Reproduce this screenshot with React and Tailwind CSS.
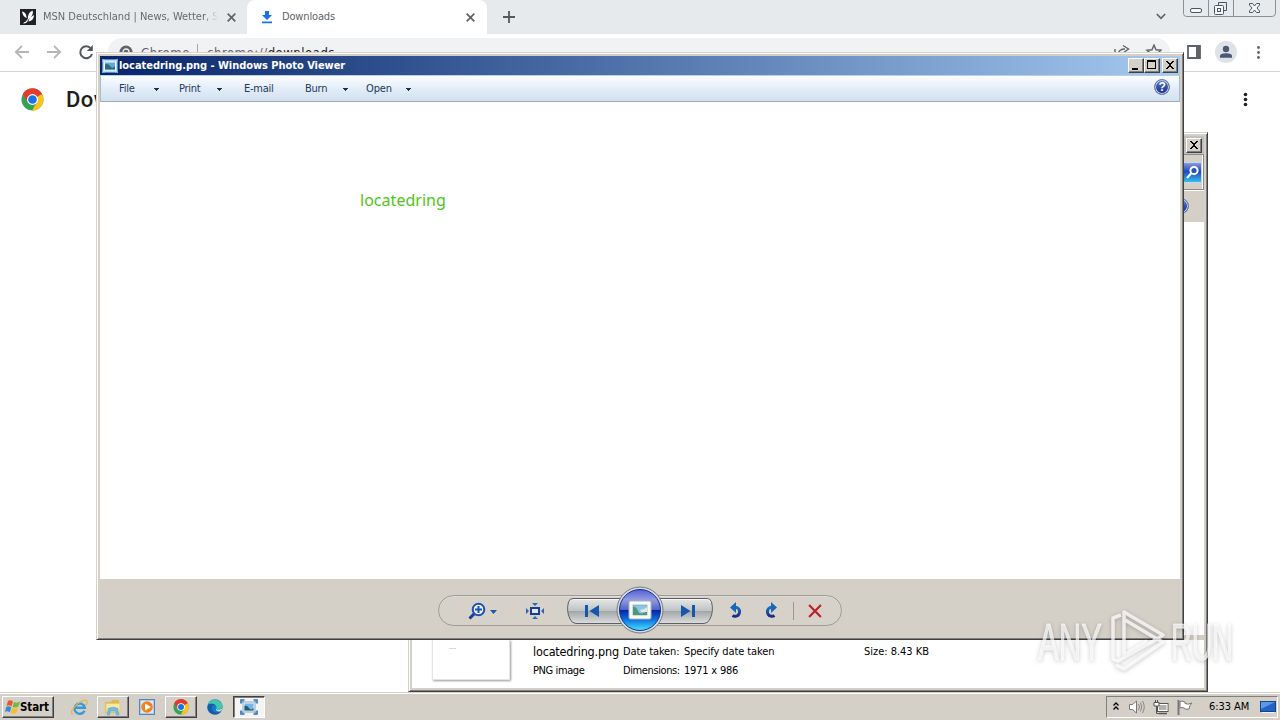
import React from "react";

const UI = "font-['DejaVu_Sans_Condensed','DejaVu_Sans',sans-serif] [font-stretch:condensed] whitespace-nowrap";

function Cross({ className = "", size = 9, w = 1.7, color = "#5f6368" }) {
  return (
    <svg className={className} width={size} height={size} viewBox="0 0 9 9">
      <path d="M0.7 0.7L8.3 8.3M8.3 0.7L0.7 8.3" stroke={color} strokeWidth={w} fill="none" />
    </svg>
  );
}

function ChromeLogo({ size }) {
  return (
    <svg width={size} height={size} viewBox="0 0 24 24">
      <circle cx="12" cy="12" r="11.5" fill="#34a353" />
      <path d="M12 12L2 6.2A11.5 11.5 0 0 1 22 6.3Z" fill="#e33b2e" />
      <path d="M12 12L22 6.3A11.5 11.5 0 0 1 11.5 23.5L17 14Z" fill="#fcc31e" />
      <path d="M12 6.3H22A11.5 11.5 0 0 0 2 6.2L7 15Z" fill="#e33b2e" />
      <circle cx="12" cy="12" r="5.7" fill="#fff" />
      <circle cx="12" cy="12" r="4.5" fill="#1a73e8" />
    </svg>
  );
}

function Dots({ color, h = 15, r = 1.4 }) {
  return (
    <svg width="5" height={h} viewBox={`0 0 5 ${h}`} fill={color}>
      <circle cx="2.5" cy={h / 2 - 5} r={r} />
      <circle cx="2.5" cy={h / 2} r={r} />
      <circle cx="2.5" cy={h / 2 + 5} r={r} />
    </svg>
  );
}

function WinButton({ kind }) {
  return (
    <div className="flex h-[15px] w-4 items-center justify-center border border-t-white border-l-white border-r-[#404040] border-b-[#404040] bg-[#d4d0c8] shadow-[inset_-1px_-1px_0_#808080]">
      <svg width="14" height="13" viewBox="0 0 14 13" shapeRendering="crispEdges">
        {kind === "min" && <path d="M3 9h6v2H3z" />}
        {kind === "max" && <path d="M2 1h9v9H2zM3 3v6h7V3z" fillRule="evenodd" />}
        {kind === "close" && (
          <path d="M3 2h2v1h1v1h2V3h1V2h2v1h-1v1H9v1H8v2h1v1h1v1h1v1H9V9H8V8H6v1H5v1H3V9h1V8h1V7h1V5H5V4H4V3H3z" />
        )}
      </svg>
    </div>
  );
}

function HelpIcon() {
  return (
    <div className="flex h-4 w-4 shrink-0 items-center justify-center rounded-full border border-[#6f83a8] bg-[#25429a] bg-linear-to-b from-[#5879cc] to-[#142c86] font-['Liberation_Sans',sans-serif] text-[12px] leading-none font-bold text-white shadow-[inset_0_0_0_1px_#c6d2eb]">
      ?
    </div>
  );
}

function PhotoIcon({ className = "", w = 16, h = 14 }) {
  return (
    <svg className={className} width={w} height={h} viewBox="0 0 16 14">
      <rect x="0.5" y="0.5" width="15" height="13" fill="#b9daf3" stroke="#5489bd" />
      <rect x="2" y="2.5" width="12" height="9" fill="#f3faff" />
      <rect x="3" y="3.5" width="10" height="7" fill="#61a9d8" />
      <path d="M3 5.5Q6 4 8 7T13 7.5V10.5H3Z" fill="#2e6b73" />
      <path d="M0 3V0H3M13 0H16V3M0 11V14H3M13 14H16V11" stroke="#7fb0dc" strokeWidth="1.4" fill="none" />
    </svg>
  );
}

function ViewerTaskIcon() {
  return (
    <svg width="18" height="16" viewBox="0 0 18 16">
      <path d="M1 4.500V1H4.500M13.500 1H17V4.500M1 11.500V15H4.500M13.500 15H17V11.500" stroke="#2c6cb0" strokeWidth="1.600" fill="none" />
      <path d="M1.500 1.500L4 4M16.500 1.500L14 4M1.500 14.500L4 12M16.500 14.500L14 12" stroke="#5c97d0" strokeWidth="1.200" />
      <rect x="3" y="3" width="12" height="10" fill="#eef6fc" stroke="#8ba9c4" />
      <rect x="4.500" y="4.500" width="9" height="7" fill="#74b6e6" />
      <path d="M4.500 7Q7 6 9 9T13.500 9V11.500H4.500Z" fill="#235a74" />
    </svg>
  );
}

function Caret() {
  return (
    <svg className="mt-px" width="5" height="3" viewBox="0 0 5 3" shapeRendering="crispEdges">
      <path d="M0 0h5v1H4v1H3v1H2V2H1V1H0z" fill="#1e2f50" />
    </svg>
  );
}

function ChromeWindow() {
  return (
    <div className="flex h-[692px] flex-col bg-white">
      <div className="flex h-[34px] bg-[#e7eaed]">
        <div className="flex w-[247px] items-center rounded-br-lg pl-5">
          <svg width="16" height="16" viewBox="0 0 16 16">
            <rect width="16" height="16" fill="#202124" />
            <path d="M2 2.500Q6 2.500 6.800 9Q3 8 2 2.500ZM8 11Q7 4 12.500 1.500Q14.500 5 8 11ZM8.500 12Q9.500 8 14 6Q14 11.500 8.500 12.500ZM7.800 9.500Q8.500 14.500 3 14.500Q4 13 6 12.500Z" fill="#fff" />
          </svg>
          <span className={`${UI} ml-[7px] w-[175px] overflow-hidden bg-linear-to-r from-[#5f6368] from-92% to-transparent bg-clip-text pt-px text-[11px] tracking-[-0.01px] text-transparent`}>
            MSN Deutschland | News, Wetter, Sport
          </span>
          <Cross className="ml-[9px]" />
        </div>
        <div className="flex w-60 items-center rounded-t-lg bg-white pl-[14px]">
          <svg width="12" height="14" viewBox="0 0 12 14">
            <path d="M4 1h4v4h3L6 10L1 5h3zM1 11.500h10v1.700H1z" fill="#1a73e8" />
          </svg>
          <span className={`${UI} ml-[9px] w-[184px] pt-px text-[11px] tracking-[-0.16px] text-[#5f6368]`}>Downloads</span>
          <Cross />
        </div>
        <div className="flex flex-1 items-center pl-4">
          <svg width="12" height="12" viewBox="0 0 12 12">
            <path d="M6 0v12M0 6h12" stroke="#55595e" strokeWidth="1.800" />
          </svg>
        </div>
        <svg className="mt-[13px] mr-[17px]" width="10" height="7" viewBox="0 0 10 7">
          <path d="M0.800 1L5 5.300L9.200 1" stroke="#5f6368" strokeWidth="1.700" fill="none" />
        </svg>
        <svg className="mr-1" width="93" height="17" viewBox="0 0 93 17">
          <path d="M0.500 0V13.500Q0.500 16.500 3.500 16.500H89Q92.500 16.500 92.500 13V0M25.500 0V16M50.500 0V16" stroke="#8b9096" fill="none" />
          <g fill="none" stroke="#4c5766">
            <rect x="7.500" y="8.500" width="11" height="4" rx="1.500" fill="#f5f6f7" />
            <path d="M35.500 5.500V2.500h8v8h-3" />
            <rect x="31.500" y="5.500" width="9" height="9" rx="1" fill="#f5f6f7" />
            <rect x="34.500" y="8.500" width="3" height="3" />
            <path d="M66.500 3.500h3l2 2.500 2-2.500h3v1.500l-2.500 3 2.500 3v1.500h-3l-2-2.500-2 2.500h-3v-1.500l2.500-3-2.500-3z" fill="#f5f6f7" />
          </g>
        </svg>
      </div>
      <div className="flex h-[38px] items-center border-b border-[#d3d5d8] pb-px pl-[14px]">
        <svg width="80" height="18" viewBox="0 0 80 18" fill="none">
          <path d="M15 9H2M8 2.800L1.800 9L8 15.200M33 9H46M40 2.800L46.200 9L40 15.200" stroke="#b4b6b8" strokeWidth="1.800" />
          <path d="M77 5.500A6 6 0 1 0 78 11" stroke="#53575b" strokeWidth="2" />
          <path d="M78.800 2v6h-6z" fill="#53575b" />
        </svg>
        <div className="ml-[14px] flex h-7 w-[1062px] items-center rounded-full bg-[#f1f2f4] pr-2 pl-[11px]">
          <svg width="14" height="14" viewBox="0 0 14 14">
            <circle cx="7" cy="7" r="6.500" fill="#5f6368" />
            <circle cx="7" cy="7" r="3" fill="#5f6368" stroke="#f1f2f4" strokeWidth="1.300" />
          </svg>
          <span className={`${UI} ml-2 w-[50px] pt-px text-[13px] tracking-[0.5px] text-[#5f6368]`}>Chrome</span>
          <span className="ml-[6px] h-4 w-px bg-[#a5a8ac]" />
          <span className={`${UI} ml-[9px] flex-1 pt-px text-[13px] tracking-[0.52px] text-[#5f6368]`}>
            chrome://<span className="text-[#202124]">downloads</span>
          </span>
          <svg width="48" height="16" viewBox="0 0 48 16" fill="none" stroke="#5f6368" strokeWidth="1.400">
            <path d="M1 5V14H13V11M4 10Q5 5 11 5M9 1.500L14.500 5L9 9" />
            <path d="M40 1L42 5.800L47 6.200L43.200 9.500L44.500 14.500L40 11.800L35.500 14.500L36.800 9.500L33 6.200L38 5.800Z" />
          </svg>
        </div>
        <svg className="ml-[17px]" width="14" height="14" viewBox="0 0 14 14">
          <path d="M1 1h12v12H1z" fill="none" stroke="#5f6368" strokeWidth="1.800" />
          <path d="M9 1h4v12H9z" fill="#5f6368" />
        </svg>
        <svg className="ml-[14px]" width="22" height="22" viewBox="0 0 22 22">
          <circle cx="11" cy="11" r="11" fill="#dfe2e7" />
          <circle cx="11" cy="8" r="3.200" fill="#4c5973" />
          <path d="M5 16.800V15Q5 12.200 11 12.200T17 15V16.800Z" fill="#4c5973" />
        </svg>
        <div className="ml-[19px]"><Dots color="#5f6368" /></div>
      </div>
      <div className="flex h-14 items-center pb-px pl-[21px]">
        <ChromeLogo size={23} />
        <span className="ml-[22px] flex-1 font-['Roboto',sans-serif] text-[22px] font-medium tracking-[0.5px] text-[#1d1e20]">Downloads</span>
        <div className="mr-[32px]"><Dots color="#202124" r={1.8} /></div>
      </div>
    </div>
  );
}

function ExplorerWindow() {
  return (
    <div className="absolute top-[132px] left-[408px] flex h-[560px] w-[800px] flex-col border border-t-[#d4d0c8] border-r-[#404040] border-b-[#404040] border-l-[#d4d0c8] bg-[#d4d0c8] p-[3px] shadow-[inset_1px_1px_0_#fff,inset_-1px_-1px_0_#808080]">
      <div className="flex h-[18px] items-center justify-end bg-[#c0c0c0] pr-[2px]">
        <WinButton kind="close" />
      </div>
      <div className="flex h-9 items-center justify-end border-y border-r border-[#8d8a84] pr-[1px] shadow-[inset_-1px_0_0_#fff,0_1px_0_#fff]">
        <svg width="19" height="21" viewBox="0 0 19 21">
          <defs>
            <linearGradient id="search" x2="0" y2="1">
              <stop stopColor="#8ea0df" /><stop offset=".45" stopColor="#1f45c2" /><stop offset="1" stopColor="#35c5ef" />
            </linearGradient>
          </defs>
          <rect x="0.500" y="0.500" width="18" height="20" fill="url(#search)" stroke="#c7d4ec" />
          <circle cx="11" cy="8.500" r="3.600" fill="#2254bd" stroke="#fff" strokeWidth="2" />
          <path d="M8 11.500L4 16" stroke="#fff" strokeWidth="2.200" />
        </svg>
      </div>
      <div className="flex h-8 items-center justify-end pr-[15px] pb-px"><HelpIcon /></div>
      <div className="flex-1 bg-white" />
      <div className="h-[5px] bg-[#d4d0c8]" />
      <div className="flex h-12 bg-white pl-5">
        <div className="h-10 w-[78px] border border-t-0 border-[#e4e4e4] bg-white pt-2 pl-4 shadow-[1px_1px_2px_#999]">
          <div className="h-px w-[7px] bg-[#d0ded0]" />
        </div>
        <div className={`${UI} mt-[2px] ml-[23px] grid h-[38px] grid-cols-[90px_61px_180px_1fr] grid-rows-2 text-[11px] leading-[19px] text-black`}>
          <span className="text-[12.5px] tracking-[-0.18px]">locatedring.png</span>
          <span className="tracking-[-0.12px]">Date taken:</span>
          <span className="tracking-[-0.1px]">Specify date taken</span>
          <span className="tracking-[-0.02px]">Size: 8.43 KB</span>
          <span className="tracking-[-0.4px]">PNG image</span>
          <span className="tracking-[-0.4px]">Dimensions:</span>
          <span className="tracking-[-0.2px]">1971 x 986</span>
        </div>
      </div>
    </div>
  );
}

function ViewerControls() {
  return (
    <div className="relative mt-4 ml-[338px] flex h-[31px] w-[404px] items-center rounded-full border border-[#9f9c98] bg-[#d6d2ca] shadow-[inset_0_1px_0_#dedbd6]">
      <svg className="ml-[29px] shrink-0" width="30" height="18" viewBox="0 0 30 18" fill="none">
        <path d="M6.500 11.500L1.500 16.500" stroke="#1c399b" strokeWidth="3" />
        <circle cx="10.500" cy="7.500" r="5.800" fill="#e9f3fb" stroke="#1e50b5" strokeWidth="2" />
        <path d="M7 7.500h7M10.500 4v7" stroke="#1e50b5" strokeWidth="2" />
        <path d="M22 8h7l-3.500 4z" fill="#1c57ad" />
      </svg>
      <svg className="ml-7 shrink-0" width="18" height="16" viewBox="0 0 18 16">
        <path d="M5 5h8v6H5z" fill="#dce9f5" stroke="#1c3b91" strokeWidth="2" />
        <path d="M6 0h6L9 3zM6 16h6l-3-3zM0 5v6l3-3zM18 5v6l-3-3z" fill="#2767b6" />
      </svg>
      <svg className="ml-[23px] shrink-0" width="146" height="26" viewBox="0 0 146 26">
        <defs>
          <linearGradient id="bar" x2="0" y2="1">
            <stop stopColor="#e6e8e8" /><stop offset=".48" stopColor="#c0c3c4" /><stop offset=".52" stopColor="#a3a7a9" /><stop offset="1" stopColor="#dddedd" />
          </linearGradient>
        </defs>
        <path d="M6 .5H140Q143.500 .5 144.500 4Q147 13 143 21Q141 25.500 137 25.500H9Q5 25.500 3 21Q-1 13 1.500 4Q2.500 .5 6 .5Z" fill="url(#bar)" stroke="#5d6164" />
        <path d="M6.500 1.500H139.500Q142.500 1.500 143.500 4.500" fill="none" stroke="#f3f4f4" />
        <path d="M18 7h3v12h-3zM32 7v12L22.500 13zM125 7h3v12h-3zM114 7v12L123.500 13z" fill="#1657ae" />
      </svg>
      <svg className="absolute -top-[10px] left-[177px]" width="48" height="48" viewBox="0 0 48 48">
        <defs>
          <linearGradient id="orb" x2="0" y2="1">
            <stop stopColor="#5160d0" /><stop offset=".25" stopColor="#939be2" /><stop offset=".49" stopColor="#5263c5" />
            <stop offset=".5" stopColor="#06219d" /><stop offset=".72" stopColor="#096dde" /><stop offset="1" stopColor="#49e5ff" />
          </linearGradient>
        </defs>
        <circle cx="24" cy="24" r="23" fill="#d9d7df" stroke="#777984" />
        <circle cx="24" cy="24" r="20.500" fill="url(#orb)" stroke="#12328e" />
        <rect x="13" y="15" width="22" height="18" rx="1.500" fill="#f8faf6" stroke="#aab8bd" />
        <rect x="17" y="19" width="14" height="10" fill="#8cc5ea" stroke="#7b9a94" strokeWidth=".6" />
        <path d="M17 21Q20 20 22 25T31 25V29H17Z" fill="#4f977c" />
        <path d="M24 24Q28 24 31 21V26H25Z" fill="#dcebe4" />
      </svg>
      <svg className="ml-4 shrink-0" width="16" height="18" viewBox="0 0 16 18" fill="none">
        <defs><linearGradient id="turn" x2="0" y2="1"><stop stopColor="#1971c5" /><stop offset="1" stopColor="#1d2887" /></linearGradient></defs>
        <path d="M6 5.500H8A4.600 4.600 0 1 1 3.500 13.500" stroke="url(#turn)" strokeWidth="3" />
        <path d="M7 0V11L1 5.500Z" fill="#1768bd" />
      </svg>
      <svg className="ml-[17px] shrink-0 -scale-x-100" width="16" height="18" viewBox="0 0 16 18" fill="none">
        <path d="M6 5.500H8A4.600 4.600 0 1 1 3.500 13.500" stroke="url(#turn)" strokeWidth="3" />
        <path d="M7 0V11L1 5.500Z" fill="#1768bd" />
      </svg>
      <span className="ml-[15px] h-[18px] w-px bg-[#9a9690]" />
      <Cross className="ml-[14px]" size={14} w={1.4} color="#bd2027" />
    </div>
  );
}

function PhotoViewer() {
  return (
    <div className="absolute top-[52px] left-[96px] flex h-[588px] w-[1088px] flex-col border border-t-[#d8d3ca] border-r-[#404040] border-b-[#404040] border-l-[#d8d3ca] bg-[#d4d0c8] p-[3px] shadow-[inset_1px_1px_0_#fff,inset_-1px_-1px_0_#808080]">
      <div className="flex h-[19px] items-center bg-linear-to-r from-[#0a246a] to-[#a6caf0] pr-[2px] pl-[2px]">
        <PhotoIcon w={16} h={14} />
        <span className="ml-[1px] flex-1 pt-px font-['DejaVu_Sans_Condensed','DejaVu_Sans',sans-serif] text-[11px] font-bold tracking-[-0.04px] whitespace-nowrap text-white [font-stretch:condensed]">
          locatedring.png - Windows Photo Viewer
        </span>
        <WinButton kind="min" />
        <WinButton kind="max" />
        <div className="ml-[2px]"><WinButton kind="close" /></div>
      </div>
      <div className={`${UI} flex h-[27px] items-center border border-t-[#b9d0ea] border-r-[#a9bccf] border-b-[#9eacbb] border-l-[#a9bccf] bg-linear-to-b from-[#fcfdff] via-[#e2edf8] via-50% to-[#d3e1ef] pr-[9px] pl-[18px] text-[11px] tracking-[-0.25px] text-[#1e395b]`}>
        <span className="w-[35px] pt-px">File</span><Caret />
        <span className="ml-5 w-[38px] pt-px">Print</span><Caret />
        <span className="ml-[22px] w-[61px] pt-px">E-mail</span>
        <span className="w-[38px] pt-px">Burn</span><Caret />
        <span className="ml-[18px] w-[40px] pt-px tracking-[-0.1px]">Open</span><Caret />
        <span className="flex-1" />
        <div className="pb-[3px]"><HelpIcon /></div>
      </div>
      <div className="h-[477px] bg-white pt-[86px] pl-[260px] font-['Noto_Sans',sans-serif] text-[16px] leading-6 tracking-[0.03px] text-[#52c41a]">
        locatedring
      </div>
      <ViewerControls />
    </div>
  );
}

function TaskButton({ active, children }) {
  return (
    <div className={active
      ? "flex h-[22px] w-8 items-center justify-center border border-t-[#404040] border-l-[#404040] border-r-white border-b-white bg-[#f5f4f2] shadow-[inset_1px_1px_0_#808080]"
      : "flex h-[22px] w-8 items-center justify-center border border-t-white border-l-white border-r-[#404040] border-b-[#404040] bg-[#d4d0c8] shadow-[inset_-1px_-1px_0_#808080]"}>
      {children}
    </div>
  );
}

function Taskbar() {
  return (
    <div className="flex h-7 items-center border-t border-[#d4d0c8] bg-[#d4d0c8] pt-px pr-[2px] pl-[2px] shadow-[inset_0_1px_0_#fff]">
      <div className="flex h-[22px] w-[52px] items-center border border-t-white border-l-white border-r-[#404040] border-b-[#404040] pl-[2px] shadow-[inset_-1px_-1px_0_#808080]">
        <svg width="15" height="16" viewBox="0 0 15 16">
          <path d="M3 2Q5 0.500 8 2.500L6.500 7.500Q4 5.500 1.500 7Z" fill="#e7572c" />
          <path d="M9 3Q12 4.500 15 2.500L13.500 7.500Q10.500 9 7.500 8Z" fill="#72b943" />
          <path d="M1.200 8Q4 6.500 6.200 8.500L4.800 13.500Q2.500 11.500 0 13Z" fill="#3689d3" />
          <path d="M7.200 9Q10 10.500 13 8.500L11.700 13.500Q8.500 15.500 5.700 14Z" fill="#f7bd29" />
        </svg>
        <span className="pt-[2px] font-['DejaVu_Sans_Condensed','DejaVu_Sans',sans-serif] text-[11.5px] leading-none font-bold tracking-[-0.1px] text-black [font-stretch:condensed]">Start</span>
      </div>
      <svg className="ml-[17px]" width="17" height="17" viewBox="0 0 18 18" fill="none">
        <path d="M14.300 12.500A5.500 5.500 0 1 1 14.700 9.300H5" stroke="#339bd8" strokeWidth="2.500" />
        <path d="M2.500 15.500C-1.500 17 0 12 5 7S16 -0.500 17 2.500C17.300 4 16 6 15.300 6.500" stroke="#e4b446" strokeWidth="1.300" />
      </svg>
      <div className="ml-[9px]"><TaskButton>
        <svg width="18" height="17" viewBox="0 0 18 17">
          <path d="M1 3h6l1-2h7v13H1z" fill="#dfb84e" />
          <path d="M2 4.500h14v8.500H2z" fill="#f9e99f" stroke="#e3cb78" />
          <path d="M4 9.500Q9 7 14 9.500V11l1 5h-2.500l-1-4h-5l-1 4H3l1-5z" fill="#70bce2" stroke="#6aa5c2" strokeWidth=".6" />
        </svg>
      </TaskButton></div>
      <svg className="ml-[10px]" width="16" height="16" viewBox="0 0 16 16">
        <rect x="0.500" y="0.500" width="15" height="15" fill="#a9ccec" stroke="#5387bc" />
        <rect x="2" y="2" width="12" height="12" fill="#d9ebf8" />
        <circle cx="8" cy="8" r="5.800" fill="#f48216" />
        <path d="M6 4.500v7l6-3.500z" fill="#fff" />
      </svg>
      <div className="ml-[10px]"><TaskButton><ChromeLogo size={16} /></TaskButton></div>
      <svg className="ml-[10px]" width="16" height="16" viewBox="0 0 16 16">
        <circle cx="8" cy="8" r="7.700" fill="#167bc7" />
        <path d="M1 5C3-1 14-1 15.700 7C16 10 12 12 9 10C11 7 8 4 1 5Z" fill="#43c6ab" />
        <path d="M5 8C4 13 9 15 14 12.500C9 18 0 15 0.500 8C1 4.500 6 4 8 6C6.500 6 5.200 7 5 8Z" fill="#155ba9" />
        <path d="M9 10C12 12 16 10 15.700 8L15 11C12 14 8.500 12 9 10Z" fill="#d4d0c8" />
      </svg>
      <div className="ml-[10px]"><TaskButton active><ViewerTaskIcon /></TaskButton></div>
      <div className="flex-1" />
      <div className="flex h-[22px] w-[172px] items-center border border-t-[#808080] border-l-[#808080] border-r-white border-b-white pl-[6px]">
        <svg className="-mt-[2px]" width="6" height="9" viewBox="0 0 6 9" fill="none" stroke="#000" strokeWidth="1.300">
          <path d="M0.500 3.500L3 1L5.500 3.500M0.500 7.500L3 5L5.500 7.500" />
        </svg>
        <svg className="ml-[10px]" width="16" height="14" viewBox="0 0 16 14">
          <path d="M0.500 4.500h3L7.500 1v12L3.500 9.500h-3z" fill="#fff" stroke="#777" />
          <path d="M9.500 4Q11.500 7 9.500 10M11.500 2.500Q14 7 11.500 11.500M13.500 1Q17 7 13.500 13" stroke="#888" fill="none" />
        </svg>
        <svg className="ml-2" width="16" height="15" viewBox="0 0 16 15">
          <rect x="4.500" y="3.500" width="10.500" height="8" fill="#b4b2ae" stroke="#555" />
          <rect x="5.500" y="4.500" width="8.500" height="6" fill="none" stroke="#fff" />
          <path d="M6 13.500h8" stroke="#555" strokeWidth="1.500" />
          <path d="M1 2.500h5v3.500H1z" fill="#fff" stroke="#555" />
          <path d="M2.500 0v2.500M4.500 0v2.500M3.500 6v7.500h3" fill="none" stroke="#555" />
        </svg>
        <svg className="ml-2" width="16" height="15" viewBox="0 0 16 15">
          <path d="M1.500 0v15" stroke="#777" strokeWidth="2" />
          <path d="M3 1.500Q5 0.500 8 2V3.500Q11 5 15 3Q12.500 5 12 9Q8.500 10 7 8Q5 7 3 8Z" fill="#fff" stroke="#777" />
        </svg>
        <span className={`${UI} ml-[16px] w-[43px] pt-px text-[11px] tracking-[-0.05px] text-black`}>6:33 AM</span>
        <svg className="ml-[8px]" width="16" height="14" viewBox="0 0 16 14">
          <rect x="0.500" y="1.500" width="15" height="10" fill="#2463c3" stroke="#18448c" />
          <path d="M1 2h14L1 9z" fill="#579be7" />
          <path d="M2 12h12v1H2z" fill="#f3f3f3" />
        </svg>
      </div>
    </div>
  );
}

function Watermark() {
  return (
    <div className="absolute top-[608px] left-[1038px] flex h-16 w-[200px] items-center font-['Liberation_Sans',sans-serif] text-[51px] leading-none text-white/65 drop-shadow-[0_1px_2px_rgba(0,0,0,0.3)] [-webkit-text-stroke:1px_rgba(255,255,255,0.6)]">
      <span className="w-[69px] shrink-0 origin-left scale-x-[0.61] pt-[4px]">ANY</span>
      <svg className="shrink-0" width="60" height="64" viewBox="0 0 60 64" fill="none" stroke="rgba(255,255,255,.75)" strokeWidth="3.500" strokeLinejoin="round">
        <path d="M14 7L6 10V51L12 54M17 36V4L56 27L50 31L18 12M11 53L50 31L56 34L17 61L9 57M17 34V47L40 33" />
      </svg>
      <span className="ml-[4px] w-[62px] shrink-0 origin-left scale-x-[0.56] pt-[4px]">RUN</span>
    </div>
  );
}

export default function App() {
  return (
    <div className="relative h-[720px] w-[1280px] overflow-hidden bg-white">
      <ChromeWindow />
      <Taskbar />
      <ExplorerWindow />
      <PhotoViewer />
      <Watermark />
    </div>
  );
}
